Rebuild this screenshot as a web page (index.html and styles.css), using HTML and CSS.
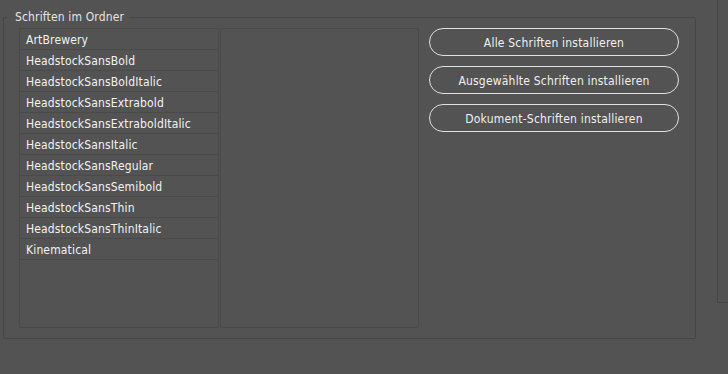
FILE: index.html
```html
<!DOCTYPE html>
<html lang="de">
<head>
    <meta charset="UTF-8">
    <title>Schriften im Ordner</title>
    <link rel="stylesheet" href="styles.css">
</head>
<body>
    <div class="layout">
        <fieldset class="folder-fonts">
            <legend>Schriften im Ordner</legend>
            <div class="content">
                <div class="lists">
                    <ul class="font-list">
                        <li>ArtBrewery</li>
                        <li>HeadstockSansBold</li>
                        <li>HeadstockSansBoldItalic</li>
                        <li>HeadstockSansExtrabold</li>
                        <li>HeadstockSansExtraboldItalic</li>
                        <li>HeadstockSansItalic</li>
                        <li>HeadstockSansRegular</li>
                        <li>HeadstockSansSemibold</li>
                        <li>HeadstockSansThin</li>
                        <li>HeadstockSansThinItalic</li>
                        <li>Kinematical</li>
                    </ul>
                    <div class="preview"></div>
                </div>
                <div class="actions">
                    <button type="button">Alle Schriften installieren</button>
                    <button type="button">Ausgewählte Schriften installieren</button>
                    <button type="button">Dokument-Schriften installieren</button>
                </div>
            </div>
        </fieldset>
        <div class="side-panel"></div>
    </div>
</body>
</html>
```

FILE: styles.css
```css
body {
    margin: 0;
    background-color: #535353;
    color: #ececec;
    font-family: "DejaVu Sans Condensed", "DejaVu Sans", sans-serif;
    font-size: 12px;
    height: 374px;
    overflow: hidden;
}
.layout {
    display: flex;
    align-items: flex-start;
}
.folder-fonts {
    flex-shrink: 0;
    margin: 10px 0 0 3px;
    padding: 4px 10px 10px 15px;
    width: 693px;
    box-sizing: border-box;
    border: 1px solid #464646;
    border-radius: 2px;
    min-width: 0;
}
.folder-fonts legend {
    margin-left: -12px;
    padding: 0 5px 0 8px;
    line-height: 14px;
    letter-spacing: 0.15px;
    color: #e4e4e4;
}
.content {
    display: flex;
    align-items: flex-start;
}
.lists {
    display: flex;
    gap: 1px;
}
.font-list,
.preview {
    height: 300px;
    border: 1px solid #4a4a4a;
    border-radius: 2px;
    box-sizing: border-box;
}
.font-list {
    width: 200px;
    margin: 0;
    padding: 0;
    list-style: none;
}
.font-list li {
    height: 20px;
    line-height: 22px;
    padding-left: 6px;
    border-bottom: 1px solid #4a4a4a;
    letter-spacing: 0.15px;
    color: #f2f2f2;
}
.preview {
    width: 199px;
}
.actions {
    display: flex;
    flex-direction: column;
    gap: 10px;
    margin-left: 10px;
}
.actions button {
    width: 250px;
    height: 28px;
    border: 1px solid #e0e0e0;
    border-radius: 14px;
    background: transparent;
    color: #f0f0f0;
    font-family: inherit;
    font-size: 12px;
    letter-spacing: 0.2px;
    padding: 1px 0 0;
    cursor: pointer;
}
.side-panel {
    flex-shrink: 0;
    margin-left: 21px;
    width: 40px;
    height: 303px;
    border-left: 1px solid #464646;
    border-bottom: 1px solid #464646;
    border-bottom-left-radius: 2px;
    box-sizing: border-box;
}
```
